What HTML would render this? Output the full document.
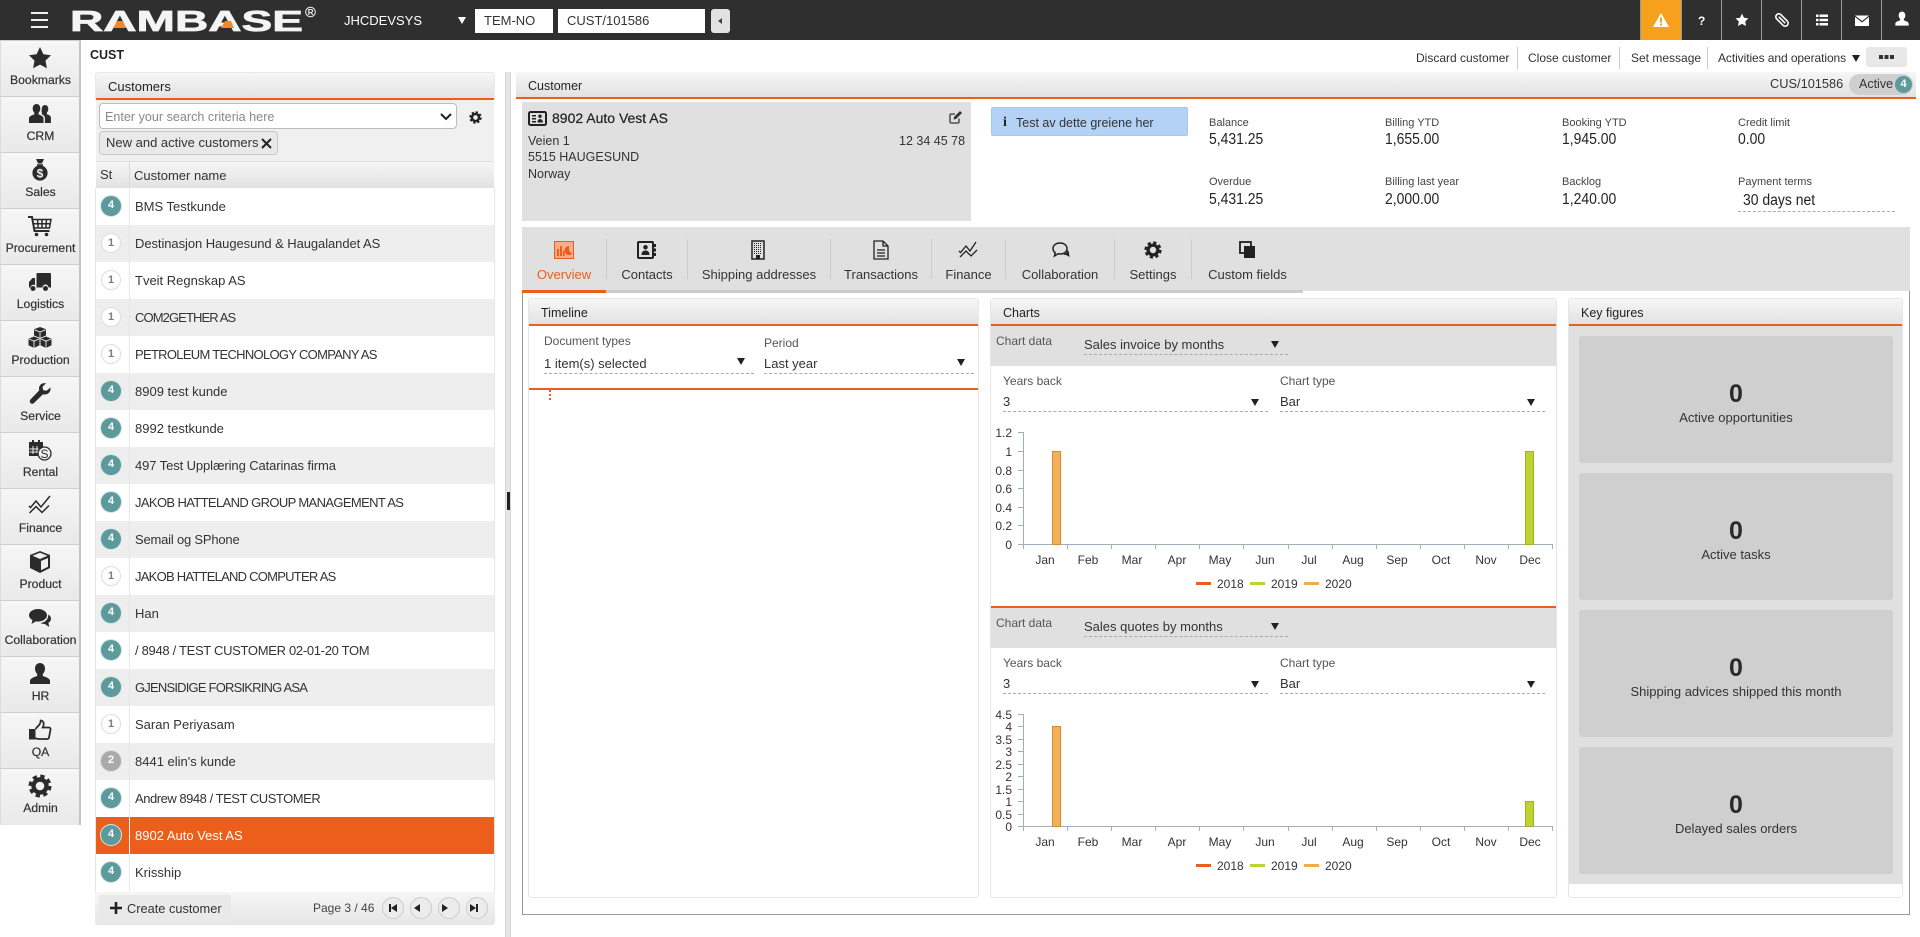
<!DOCTYPE html>
<html><head><meta charset="utf-8"><title>CUST</title>
<style>
*{box-sizing:border-box}
html,body{margin:0;padding:0;width:1920px;height:937px;overflow:hidden;background:#fff;font-family:"Liberation Sans",sans-serif;font-size:13px;color:#333}
.a,.t{position:absolute}
.t{white-space:nowrap;line-height:16px;height:16px}
.g{background:linear-gradient(#f6f6f6,#e2e2e2)}
.o{position:absolute;background:#ec5e1c;height:2px}
.d{position:absolute;border-bottom:1px dashed #aaa;height:1px}
.tri{position:absolute;width:0;height:0;border-left:4px solid transparent;border-right:4px solid transparent;border-top:7px solid #222}
svg{position:absolute;overflow:visible}
.nav{position:absolute;left:0;width:81px;height:56px;border-top:1px solid #cfcfcf;background:linear-gradient(#f6f6f6,#e9e9e9);border-right:2px solid #c4c4c4;border-left:1px solid #ddd}
.nav span{position:absolute;left:0;width:79px;text-align:center;top:31px;line-height:16px;font-size:12.2px;color:#333;-webkit-text-stroke:.2px #333}
.nav svg{left:27px;top:5px}
.top{position:absolute;top:0;width:40px;height:40px;border-left:1px solid #999}
.top svg{left:10px;top:10px}
.row{position:absolute;left:96px;width:398px;height:37px;line-height:38px;padding-left:39px;font-size:13px;color:#333;white-space:nowrap}
.row i{position:absolute;left:33px;top:0;width:1px;height:37px;background:#e6e6e6}
.row b{position:absolute;left:5px;top:8px;width:20px;height:20px;border-radius:50%;text-align:center;line-height:19px;font-size:11px;font-weight:bold;color:#fff;background:#5c9a9c;box-shadow:0 0 0 1px #d8e4e4}
.row b.w{background:#fff;color:#7d7d7d;border:1px solid #ddd;box-shadow:none}
.row b.s{background:#aaa;box-shadow:0 0 0 1px #ddd}
.e{background:#eee}
.pn{position:absolute;width:22px;height:22px;top:897px;border:1px solid #ccc;border-radius:50%;background:#ececec}
.lab{position:absolute;white-space:nowrap;font-size:12px;line-height:14px;color:#444}
.st{font-size:11px;color:#444}
.val{position:absolute;white-space:nowrap;font-size:15.5px;line-height:18px;color:#222;transform:scaleX(.9);transform-origin:0 50%}
.sep{position:absolute;width:1px;background:#ccc}
.tab{position:absolute;top:267px;height:16px;line-height:16px;text-align:center;white-space:nowrap;font-size:13px;color:#333}
.sp{position:absolute;width:1px;top:239px;height:40px;background:#ccc}
.card{position:absolute;left:1579px;width:314px;height:127px;background:#cfcfcf;border-radius:3px;text-align:center}
.card b{position:absolute;left:0;right:0;top:45px;font-size:25px;line-height:26px;color:#2a2a2a}
.card span{position:absolute;left:0;right:0;top:74px;font-size:13px;line-height:16px;color:#333}
.pan{position:absolute;border:1px solid #e6e6e6;border-radius:3px;background:#fff}
.ac{font-size:12px}
</style></head><body>

<svg width="0" height="0" style="position:absolute">
<defs>
<symbol id="gear" viewBox="0 0 24 24"><circle cx="12" cy="12" r="6.5" fill="none" stroke="currentColor" stroke-width="4.4"/><circle cx="12" cy="12" r="9.7" fill="none" stroke="currentColor" stroke-width="3.6" stroke-dasharray="4.2 3.42"/></symbol>
<symbol id="star" viewBox="0 0 24 24"><path fill="currentColor" d="M12 1l3.4 7.2 7.6 1-5.5 5.4 1.4 7.7-6.9-3.7-6.9 3.7 1.4-7.7L1 9.2l7.6-1z"/></symbol>
<symbol id="person" viewBox="0 0 24 24"><path fill="currentColor" d="M12 1c3.2 0 5 2.500 5 5.600 0 2.200-.9 4.200-2.200 5.300v2.100c3 1 7.200 2.300 7.200 5v3H2v-3c0-2.700 4.200-4 7.200-5v-2.100C7.900 10.800 7 8.800 7 6.600 7 3.500 8.800 1 12 1z"/></symbol>
<symbol id="chat" viewBox="0 0 24 24"><path fill="currentColor" d="M10 3c5 0 9 2.800 9 6.300s-4 6.300-9 6.300c-.8 0-1.500-.1-2.200-.2L3.500 18l.9-4C2.300 12.900 1 11.200 1 9.300 1 5.800 5 3 10 3z"/><path fill="currentColor" d="M20.300 8.500c1.700 1 2.700 2.500 2.700 4.200 0 1.700-1 3.200-2.600 4.100l.8 4.200-4.400-3c-1.600 0-3.200-.4-4.400-1 4-.4 8-3 7.900-8.500z"/></symbol>
</defs></svg>

<!-- top bar -->
<div class="a" style="left:0;top:0;width:1920px;height:40px;background:#2f2f2f"></div>
<div class="a" style="left:31px;top:12px;width:17px;height:2px;background:#eee"></div>
<div class="a" style="left:31px;top:19px;width:17px;height:2px;background:#eee"></div>
<div class="a" style="left:31px;top:26px;width:17px;height:2px;background:#eee"></div>
<svg style="left:0;top:0" width="340" height="40">
<text x="70" y="31" font-family="Liberation Sans" font-weight="bold" font-size="29" fill="#f4f4f4" stroke="#f4f4f4" stroke-width=".7" textLength="233" lengthAdjust="spacingAndGlyphs">RAMBASE</text>
<path d="M113 28l4-7h6l3 7z" fill="#ee8a2c"/><path d="M221 28l4-7h6l3 7z" fill="#ee8a2c"/>
<circle cx="310.500" cy="12" r="4.800" fill="none" stroke="#eee" stroke-width="1"/>
<text x="307.800" y="15" font-family="Liberation Sans" font-size="8" font-weight="bold" fill="#eee">R</text>
</svg>
<div class="t" style="left:344px;top:13px;color:#fff;font-size:13px">JHCDEVSYS</div>
<div class="tri" style="left:458px;top:17px;border-top-color:#fff"></div>
<div class="a" style="left:475px;top:9px;width:78px;height:24px;background:#fff"></div>
<div class="t" style="left:484px;top:13px;color:#333">TEM-NO</div>
<div class="a" style="left:558px;top:9px;width:147px;height:24px;background:#fff"></div>
<div class="t" style="left:567px;top:13px;color:#333">CUST/101586</div>
<div class="a" style="left:711px;top:9px;width:19px;height:24px;background:#e2e2e2;border-radius:3px"></div>
<svg style="left:711px;top:9px" width="19" height="24"><path d="M11 9l-4 3 4 3z" fill="#444"/></svg>

<div class="top" style="left:1640px;width:41px;background:#f7a01d"><svg width="20" height="20"><path d="M10 3l8 14H2z" fill="#fff"/><rect x="9" y="7.500" width="2" height="5" fill="#f7a01d"/><rect x="9" y="13.500" width="2" height="2" fill="#f7a01d"/></svg></div>
<div class="top" style="left:1681px"><svg width="20" height="20"><text x="6" y="15" font-family="Liberation Sans" font-weight="bold" font-size="12" fill="#fff">?</text></svg></div>
<div class="top" style="left:1721px"><svg width="20" height="20" style="color:#fff"><use href="#star" x="3" y="3" width="14" height="14"/></svg></div>
<div class="top" style="left:1761px"><svg width="20" height="20"><g transform="rotate(45 10 10)" fill="none" stroke="#fff" stroke-width="1.600"><rect x="2.500" y="7" width="15" height="6" rx="3"/><path d="M5.500 10h9"/></g></svg></div>
<div class="top" style="left:1801px"><svg width="20" height="20"><path fill="#fff" d="M4 4.500h2.500V7H4zM7.500 4.500H16V7H7.500zM4 8.800h2.500v2.500H4zM7.500 8.800H16v2.500H7.500zM4 13h2.500v2.500H4zM7.500 13H16v2.500H7.500z"/></svg></div>
<div class="top" style="left:1841px"><svg width="20" height="20"><path fill="#fff" d="M3 5.500h14l-7 5.500zM3 7v9h14V7l-7 5.500z"/></svg></div>
<div class="top" style="left:1881px"><svg width="20" height="20" style="color:#fff"><use href="#person" x="2" y="1" width="16" height="16"/></svg></div>

<!-- sidebar -->
<div class="a" style="left:0;top:40px;width:81px;height:785px;border-bottom:2px solid #bbb"></div>
<div class="nav" style="top:40px"><svg width="24" height="24" style="color:#2b2b2b"><use href="#star"/></svg><span>Bookmarks</span></div>
<div class="nav" style="top:96px"><svg width="24" height="24"><path fill="#2b2b2b" d="M8.500 2c2.400 0 3.800 2 3.800 4.500 0 1.700-.7 3.200-1.700 4.100v1.900c2.300.8 4.900 1.800 4.900 4V21H1v-4.500c0-2.200 2.700-3.200 5.300-4v-1.900c-1-.9-1.600-2.400-1.600-4.100C4.700 4 6.100 2 8.500 2z"/><path fill="#2b2b2b" d="M17 3c2 0 3.300 1.800 3.300 4 0 1.500-.6 2.800-1.400 3.600v1.700c2 .6 4 1.500 4 3.400V21h-6v-5c0-1.900-1.500-3-3-3.800v-1.500c-.8-.8-.1-2.300-.1-3.700 0-2.200 1.200-4 3.200-4z"/></svg><span>CRM</span></div>
<div class="nav" style="top:152px"><svg width="24" height="24"><path fill="#2b2b2b" d="M8 1h8l-2 4.500h-4zM9 6.300h6v1.500H9z"/><circle cx="12" cy="15" r="7.600" fill="#2b2b2b"/><text x="12" y="19.500" text-anchor="middle" font-family="Liberation Sans" font-weight="bold" font-size="12" fill="#f0f0f0">$</text></svg><span>Sales</span></div>
<div class="nav" style="top:208px"><svg width="24" height="24"><path fill="none" stroke="#2b2b2b" stroke-width="2" d="M0 3h4l2.500 14h15"/><path fill="none" stroke="#2b2b2b" stroke-width="1.500" d="M5 5.500h18l-1.600 8.500H6.500M9.500 5.500l.7 8.500M14 5.500v8.500M18.500 5.500l-.7 8.500M5.500 9.700h16.800"/><circle cx="8.500" cy="20.500" r="1.800" fill="#2b2b2b"/><circle cx="18.500" cy="20.500" r="1.800" fill="#2b2b2b"/></svg><span>Procurement</span></div>
<div class="nav" style="top:264px"><svg width="24" height="24"><path fill="#2b2b2b" d="M9 3h13c.6 0 1 .4 1 1v13.500h-2.500a3 3 0 0 0-6 0H8.500V5c0-1 .2-2 .5-2zM7 8H4.500L1 12v5.500h1.500a3 3 0 0 1 4.500-2.400z"/><circle cx="5" cy="18.500" r="2.500" fill="#2b2b2b"/><circle cx="17.500" cy="18.500" r="2.500" fill="#2b2b2b"/></svg><span>Logistics</span></div>
<div class="nav" style="top:320px"><svg width="24" height="24"><path fill="#2b2b2b" d="M12 1l6 2.300v6.200l-6 2.500-6-2.500V3.300zM6 10.500l5.500 2.300v6.500L6 22 .5 19.300v-6.500zM18 10.500l5.500 2.300v6.500L18 22l-5.500-2.700v-6.500z"/><path stroke="#efefef" stroke-width=".9" fill="none" d="M6.500 3.800L12 6l5.500-2.200M12 6v6M1 13l5 2.200 5-2.200M6 15.200V22M13 13l5 2.200 5-2.200M18 15.200V22"/></svg><span>Production</span></div>
<div class="nav" style="top:376px"><svg width="24" height="24"><path fill="#2b2b2b" d="M22.500 5.500c.6 3.300-1.500 6.400-4.800 6.900-1 .2-1.900 0-2.700-.2L6 21c-1 1-2.500 1-3.500 0s-1-2.500 0-3.500l8.800-9.200c-.3-.9-.4-1.800-.2-2.800C11.700 2.300 14.900.5 18 1.300l-3.500 3.500.7 3.300 3.300.7z"/></svg><span>Service</span></div>
<div class="nav" style="top:432px"><svg width="24" height="24"><path fill="#2b2b2b" d="M1 4h3V2h2v2h4V2h2v2h3v5.300A7.500 7.500 0 0 0 9.700 18H1z"/><path stroke="#efefef" stroke-width="1" d="M5 8v8M9 8v7M1.500 11h9M1.500 14h7"/><circle cx="16.500" cy="15.500" r="6.500" fill="none" stroke="#2b2b2b" stroke-width="1.300"/><text x="16.500" y="20" text-anchor="middle" font-family="Liberation Sans" font-size="12" fill="#2b2b2b">S</text></svg><span>Rental</span></div>
<div class="nav" style="top:488px"><svg width="24" height="24"><path fill="none" stroke="#2b2b2b" stroke-width="1.500" d="M1 12l1.500 1.500L8 7l5 6 9-11M1.500 19l6.500-6.500 6 6 7-7"/></svg><span>Finance</span></div>
<div class="nav" style="top:544px"><svg width="24" height="24"><path fill="#2b2b2b" d="M12 1l10 4v13l-10 5-10-5V5z"/><path fill="#efefef" d="M13 11l7-3v8.800l-7 3.500zM12 2.800l7.500 3L12 9 4.500 5.800z"/></svg><span>Product</span></div>
<div class="nav" style="top:600px"><svg width="24" height="24" style="color:#2b2b2b"><use href="#chat"/></svg><span>Collaboration</span></div>
<div class="nav" style="top:656px"><svg width="24" height="24" style="color:#2b2b2b"><use href="#person"/></svg><span>HR</span></div>
<div class="nav" style="top:712px"><svg width="24" height="24"><path fill="none" stroke="#2b2b2b" stroke-width="1.800" d="M7.500 11l4-4.500c.7-1 1.200-2.500 1.200-4 2 0 3 1.500 3 3.500 0 1.200-.5 2.500-1 3.500h6.300c1 0 1.700 1 1.500 2l-1.500 8c-.2 1-1 1.500-2 1.500H10c-1 0-1.700-.5-2.500-1"/><rect x="1" y="11" width="6.500" height="10.500" fill="#2b2b2b"/></svg><span>QA</span></div>
<div class="nav" style="top:768px;height:57px"><svg width="24" height="24" style="color:#2b2b2b"><use href="#gear"/></svg><span>Admin</span></div>

<div class="t" style="left:90px;top:47px;font-weight:bold;font-size:12.5px;color:#222">CUST</div>

<!-- Customers panel -->
<div class="a g" style="left:95px;top:72px;width:400px;height:27px;border:1px solid #e8e8e8;border-bottom:0;border-radius:3px 3px 0 0"></div>
<div class="t" style="left:108px;top:79px;color:#222">Customers</div>
<div class="o" style="left:96px;top:98px;width:398px"></div>
<div class="a" style="left:96px;top:100px;width:398px;height:61px;background:#f0f0f0"></div>
<div class="a" style="left:99px;top:103px;width:358px;height:26px;background:#fff;border:1px solid #bbb;border-radius:4px"></div>
<div class="t" style="left:105px;top:109px;color:#888;font-size:12.6px">Enter your search criteria here</div>
<svg style="left:440px;top:112px" width="12" height="9"><path d="M1 2l5 5 5-5" fill="none" stroke="#222" stroke-width="2"/></svg>
<svg style="left:469px;top:111px;color:#222" width="13" height="13"><use href="#gear"/></svg>
<div class="a" style="left:99px;top:131px;width:179px;height:24px;background:#e9e9e9;border:1px solid #c8c8c8;border-radius:4px"></div>
<div class="t" style="left:106px;top:135px;color:#333">New and active customers</div>
<svg style="left:261px;top:138px" width="11" height="11"><path d="M1 1l9 9M10 1l-9 9" stroke="#222" stroke-width="2"/></svg>
<div class="a g" style="left:96px;top:161px;width:398px;height:27px;border-top:1px solid #ddd"></div>
<div class="a" style="left:129px;top:161px;width:1px;height:27px;background:#d8d8d8"></div>
<div class="t" style="left:100px;top:167px">St</div>
<div class="t" style="left:134px;top:168px">Customer name</div>

<div class="row" style="top:188px"><i></i><b>4</b>BMS Testkunde</div>
<div class="row e" style="top:225px"><i></i><b class="w">1</b><span style="letter-spacing:-.07px">Destinasjon Haugesund &amp; Haugalandet AS</span></div>
<div class="row" style="top:262px"><i></i><b class="w">1</b>Tveit Regnskap AS</div>
<div class="row e" style="top:299px"><i></i><b class="w">1</b><span style="letter-spacing:-.9px">COM2GETHER AS</span></div>
<div class="row" style="top:336px"><i></i><b class="w">1</b><span style="letter-spacing:-.7px">PETROLEUM TECHNOLOGY COMPANY AS</span></div>
<div class="row e" style="top:373px"><i></i><b>4</b>8909 test kunde</div>
<div class="row" style="top:410px"><i></i><b>4</b>8992 testkunde</div>
<div class="row e" style="top:447px"><i></i><b>4</b><span style="letter-spacing:-.1px">497 Test Upplæring Catarinas firma</span></div>
<div class="row" style="top:484px"><i></i><b>4</b><span style="letter-spacing:-.63px">JAKOB HATTELAND GROUP MANAGEMENT AS</span></div>
<div class="row e" style="top:521px"><i></i><b>4</b><span style="letter-spacing:-.2px">Semail og SPhone</span></div>
<div class="row" style="top:558px"><i></i><b class="w">1</b><span style="letter-spacing:-.75px">JAKOB HATTELAND COMPUTER AS</span></div>
<div class="row e" style="top:595px"><i></i><b>4</b>Han</div>
<div class="row" style="top:632px"><i></i><b>4</b><span style="letter-spacing:-.31px">/ 8948 / TEST CUSTOMER 02-01-20 TOM</span></div>
<div class="row e" style="top:669px"><i></i><b>4</b><span style="letter-spacing:-.8px">GJENSIDIGE FORSIKRING ASA</span></div>
<div class="row" style="top:706px"><i></i><b class="w">1</b>Saran Periyasam</div>
<div class="row e" style="top:743px"><i></i><b class="s">2</b>8441 elin's kunde</div>
<div class="row" style="top:780px"><i></i><b>4</b><span style="letter-spacing:-.47px">Andrew 8948 / TEST CUSTOMER</span></div>
<div class="row" style="top:817px;background:#ec5e1c;color:#fff"><i style="background:#fff"></i><b>4</b>8902 Auto Vest AS</div>
<div class="row" style="top:854px"><i></i><b>4</b>Krisship</div>
<div class="a" style="left:95px;top:188px;width:1px;height:704px;background:#e6e6e6"></div>
<div class="a" style="left:494px;top:188px;width:1px;height:704px;background:#e6e6e6"></div>

<div class="a" style="left:95px;top:892px;width:400px;height:33px;background:linear-gradient(#f6f6f6,#e6e6e6);border-radius:0 0 3px 3px"></div>
<div class="a" style="left:99px;top:895px;width:132px;height:29px;background:#e9e9e9;border-radius:3px"></div>
<svg style="left:110px;top:902px" width="12" height="12"><path d="M6 0v12M0 6h12" stroke="#222" stroke-width="2.600"/></svg>
<div class="t" style="left:127px;top:901px;color:#333;font-size:12.8px">Create customer</div>
<div class="t" style="left:313px;top:900px;font-size:12px;color:#444">Page 3 / 46</div>
<div class="pn" style="left:382px"></div><div class="pn" style="left:410px"></div><div class="pn" style="left:438px"></div><div class="pn" style="left:466px"></div>
<svg style="left:382px;top:897px" width="110" height="22"><path fill="#222" d="M7 7h2v8H7zM15 7v8l-6-4zM38 7v8l-6-4zM60 7v8l6-4zM88 7v8l6-4zM94 7h2v8h-2z"/></svg>

<!-- splitter -->
<div class="a" style="left:505px;top:72px;width:6px;height:865px;background:#e6e6e6;border-left:1px solid #d4d4d4;border-right:1px solid #d4d4d4"></div>
<div class="a" style="left:507px;top:492px;width:3px;height:18px;background:#222"></div>

<!-- action bar -->
<div class="t ac" style="left:1416px;top:50px">Discard customer</div>
<div class="sep" style="left:1517px;top:47px;height:22px"></div>
<div class="t ac" style="left:1528px;top:50px">Close customer</div>
<div class="sep" style="left:1619px;top:47px;height:22px"></div>
<div class="t ac" style="left:1631px;top:50px">Set message</div>
<div class="sep" style="left:1707px;top:47px;height:22px"></div>
<div class="t ac" style="left:1718px;top:50px;letter-spacing:-.08px">Activities and operations</div>
<div class="tri" style="left:1852px;top:55px"></div>
<div class="a" style="left:1866px;top:47px;width:41px;height:20px;background:#e8e8e8;border-radius:3px"></div>
<svg style="left:1879px;top:55px" width="15" height="5"><path fill="#333" d="M0 0h4v4H0zM5.500 0h4v4h-4zM11 0h4v4h-4z"/></svg>

<!-- Customer header -->
<div class="a g" style="left:516px;top:72px;width:1400px;height:25px;border-radius:3px 3px 0 0"></div>
<div class="o" style="left:516px;top:97px;width:1400px"></div>
<div class="t" style="left:528px;top:78px;font-size:12.5px;color:#222">Customer</div>
<div class="t" style="left:1770px;top:76px;color:#333;font-size:12.8px">CUS/101586</div>
<div class="a" style="left:1849px;top:74px;width:64px;height:21px;background:#cfcfcf;border-radius:11px"></div>
<div class="t" style="left:1859px;top:76px;color:#333;font-size:12.5px">Active</div>
<div class="a" style="left:1895px;top:76px;width:17px;height:17px;border-radius:50%;background:#5c9a9c;color:#fff;font-weight:bold;font-size:11px;line-height:17px;text-align:center">4</div>

<!-- info card -->
<div class="a" style="left:522px;top:102px;width:449px;height:119px;background:#e0e0e0"></div>
<svg style="left:528px;top:111px" width="19" height="15"><rect x="1" y="1" width="17" height="13" rx="1.500" fill="none" stroke="#222" stroke-width="2"/><path fill="#222" d="M4 4h4v1.500H4zM4 7h4v1.500H4zM4 10h4v1.500H4zM12 3.500a1.700 1.700 0 1 1 0 3.400 1.700 1.700 0 0 1 0-3.400zM9.500 11.500c0-2 1-3.500 2.500-3.500s3 1.500 3 3.500z"/></svg>
<div class="t" style="left:552px;top:110px;font-size:14px;color:#222;-webkit-text-stroke:.2px #222">8902 Auto Vest AS</div>
<svg style="left:949px;top:110px" width="14" height="14"><path fill="none" stroke="#333" stroke-width="1.300" d="M10 8.500V12c0 .5-.5 1-1 1H2c-.5 0-1-.5-1-1V5c0-.5.500-1 1-1h4"/><path fill="#333" d="M5 7l6-6 2 2-6 6-2.500.5z"/></svg>
<div class="t" style="left:528px;top:133px;font-size:12.5px">Veien 1</div>
<div class="t" style="left:899px;top:133px;font-size:12.5px">12 34 45 78</div>
<div class="t" style="left:528px;top:149px;font-size:12.5px">5515 HAUGESUND</div>
<div class="t" style="left:528px;top:166px;font-size:12.5px">Norway</div>

<div class="a" style="left:991px;top:107px;width:197px;height:29px;background:#b3d2f5;border:1px solid #a6c8ec;border-radius:2px"></div>
<div class="t" style="left:1003px;top:115px;font-weight:bold;font-family:'Liberation Serif',serif;font-size:14px;color:#222">i</div>
<div class="t" style="left:1016px;top:115px;font-size:12.5px">Test av dette greiene her</div>

<div class="lab st" style="left:1209px;top:116px">Balance</div><div class="val" style="left:1209px;top:131px">5,431.25</div>
<div class="lab st" style="left:1209px;top:175px">Overdue</div><div class="val" style="left:1209px;top:191px">5,431.25</div>
<div class="lab st" style="left:1385px;top:116px">Billing YTD</div><div class="val" style="left:1385px;top:131px">1,655.00</div>
<div class="lab st" style="left:1385px;top:175px">Billing last year</div><div class="val" style="left:1385px;top:191px">2,000.00</div>
<div class="lab st" style="left:1562px;top:116px">Booking YTD</div><div class="val" style="left:1562px;top:131px">1,945.00</div>
<div class="lab st" style="left:1562px;top:175px">Backlog</div><div class="val" style="left:1562px;top:191px">1,240.00</div>
<div class="lab st" style="left:1738px;top:116px">Credit limit</div><div class="val" style="left:1738px;top:131px">0.00</div>
<div class="lab st" style="left:1738px;top:175px">Payment terms</div><div class="val" style="left:1743px;top:192px">30 days net</div>
<div class="d" style="left:1738px;top:211px;width:157px"></div>

<!-- tabs -->
<div class="a" style="left:522px;top:227px;width:1388px;height:64px;background:#e0e0e0"></div>
<div class="a" style="left:522px;top:291px;width:1388px;height:624px;border:1px solid #999;border-top:0"></div>
<div class="a" style="left:522px;top:290px;width:781px;height:3px;background:#ccc"></div>
<div class="a" style="left:522px;top:290px;width:84px;height:3px;background:#ec5e1c"></div>
<div class="sp" style="left:606px"></div><div class="sp" style="left:687px"></div><div class="sp" style="left:830px"></div><div class="sp" style="left:931px"></div><div class="sp" style="left:1005px"></div><div class="sp" style="left:1114px"></div><div class="sp" style="left:1191px"></div>
<div class="tab" style="left:522px;width:84px;color:#ec5e1c">Overview</div>
<div class="tab" style="left:607px;width:80px">Contacts</div>
<div class="tab" style="left:688px;width:142px">Shipping addresses</div>
<div class="tab" style="left:831px;width:100px">Transactions</div>
<div class="tab" style="left:932px;width:73px">Finance</div>
<div class="tab" style="left:1006px;width:108px">Collaboration</div>
<div class="tab" style="left:1115px;width:76px">Settings</div>
<div class="tab" style="left:1192px;width:111px">Custom fields</div>
<svg style="left:554px;top:241px" width="20" height="18"><rect x=".5" y=".5" width="19" height="17" fill="#f5ad8a" stroke="#ec5e1c"/><path fill="#ec5e1c" d="M3 8h2v7H3zM6 5h2v10H6zM9 10h1.500v5H9z"/><path fill="#ec5e1c" d="M15 5a4.500 4.500 0 1 0 3 7.800L15 9.500z"/></svg>
<svg style="left:637px;top:241px" width="20" height="18"><rect x="1" y="1" width="15" height="16" rx="1" fill="none" stroke="#222" stroke-width="2"/><path fill="#222" d="M17 3h2v3h-2zM17 7.500h2v3h-2zM17 12h2v3h-2zM8.500 4a2.200 2.200 0 1 1 0 4.500 2.200 2.200 0 0 1 0-4.500zM4.500 14c0-3 1.500-4.500 4-4.500s4 1.500 4 4.500z"/></svg>
<svg style="left:751px;top:240px" width="14" height="20"><rect x="1" y="1" width="12" height="18" fill="none" stroke="#222" stroke-width="1.500"/><path stroke="#222" stroke-width="1" stroke-dasharray="1 1" d="M3.500 3v11M5.500 3v11M7.500 3v11M9.500 3v11"/><rect x="5" y="15" width="4" height="4" fill="#222"/></svg>
<svg style="left:873px;top:240px" width="16" height="20"><path fill="none" stroke="#222" stroke-width="1.300" d="M1 1h9l5 5v13H1zM10 1v5h5M4 10h8M4 13h8M4 16h8"/></svg>
<svg style="left:959px;top:241px" width="20" height="18"><path fill="none" stroke="#222" stroke-width="1.300" d="M0 10l1.500 1.500L7 5l4 5 6-9M1 16l6-6 5 5 6-6"/></svg>
<svg style="left:1051px;top:241px" width="20" height="18"><path fill="none" stroke="#222" stroke-width="1.500" d="M9 2c4 0 7 2.300 7 5.500S13 13 9 13c-.7 0-1.400-.1-2-.2L3.500 15l.7-3.200C2.800 10.700 2 9.200 2 7.500 2 4.300 5 2 9 2z"/><path fill="#222" d="M16.500 9c1 .8 1.500 2 1.500 3.200l.6 3.800-3.500-2c-1.200 0-2.200-.2-3-.8 2-.3 4-1.500 4.400-4.200z"/></svg>
<svg style="left:1144px;top:241px;color:#222" width="18" height="18"><use href="#gear"/></svg>
<svg style="left:1238px;top:241px" width="20" height="18"><rect x="2" y="1" width="11" height="11" fill="none" stroke="#222" stroke-width="1.800"/><rect x="6" y="5" width="11" height="12" fill="#222"/></svg>

<!-- Timeline -->
<div class="pan" style="left:528px;top:298px;width:451px;height:600px"></div>
<div class="a g" style="left:529px;top:299px;width:449px;height:25px"></div>
<div class="o" style="left:529px;top:324px;width:449px"></div>
<div class="t" style="left:541px;top:305px;font-size:12.5px;color:#222">Timeline</div>
<div class="lab" style="left:544px;top:334px;color:#555">Document types</div>
<div class="lab" style="left:764px;top:336px;color:#555">Period</div>
<div class="t" style="left:544px;top:356px">1 item(s) selected</div>
<div class="t" style="left:764px;top:356px">Last year</div>
<div class="tri" style="left:737px;top:358px"></div><div class="tri" style="left:957px;top:359px"></div>
<div class="d" style="left:544px;top:373px;width:210px"></div><div class="d" style="left:764px;top:373px;width:210px"></div>
<div class="o" style="left:529px;top:388px;width:449px"></div>
<div class="a" style="left:549px;top:390px;width:2px;height:10px;background:repeating-linear-gradient(#ec5e1c 0 2px,transparent 2px 4px)"></div>

<!-- Charts panel -->
<div class="pan" style="left:990px;top:298px;width:567px;height:600px"></div>
<div class="a g" style="left:991px;top:299px;width:565px;height:25px"></div>
<div class="o" style="left:991px;top:324px;width:565px"></div>
<div class="t" style="left:1003px;top:305px;font-size:12.5px;color:#222">Charts</div>
<div class="a" style="left:991px;top:326px;width:565px;height:40px;background:#e0e0e0"></div>
<div class="lab" style="left:996px;top:334px;color:#555">Chart data</div>
<div class="t" style="left:1084px;top:337px">Sales invoice by months</div>
<div class="tri" style="left:1271px;top:341px"></div>
<div class="d" style="left:1084px;top:354px;width:204px"></div>
<div class="lab" style="left:1003px;top:374px;color:#555">Years back</div>
<div class="lab" style="left:1280px;top:374px;color:#555">Chart type</div>
<div class="t" style="left:1003px;top:394px">3</div><div class="t" style="left:1280px;top:394px">Bar</div>
<div class="tri" style="left:1251px;top:399px"></div><div class="tri" style="left:1527px;top:399px"></div>
<div class="d" style="left:1003px;top:411px;width:265px"></div><div class="d" style="left:1280px;top:411px;width:265px"></div>

<div class="o" style="left:991px;top:606px;width:565px"></div>
<div class="a" style="left:991px;top:608px;width:565px;height:40px;background:#e0e0e0"></div>
<div class="lab" style="left:996px;top:616px;color:#555">Chart data</div>
<div class="t" style="left:1084px;top:619px">Sales quotes by months</div>
<div class="tri" style="left:1271px;top:623px"></div>
<div class="d" style="left:1084px;top:636px;width:204px"></div>
<div class="lab" style="left:1003px;top:656px;color:#555">Years back</div>
<div class="lab" style="left:1280px;top:656px;color:#555">Chart type</div>
<div class="t" style="left:1003px;top:676px">3</div><div class="t" style="left:1280px;top:676px">Bar</div>
<div class="tri" style="left:1251px;top:681px"></div><div class="tri" style="left:1527px;top:681px"></div>
<div class="d" style="left:1003px;top:693px;width:265px"></div><div class="d" style="left:1280px;top:693px;width:265px"></div>

<svg style="left:0;top:0" width="1920" height="937" font-family="Liberation Sans" font-size="12" fill="#333">
<g fill="none" stroke="#9fb0b8" stroke-width="1">
<path d="M1023.500 432V544.500H1552.500M1018 432.500h5M1018 451.500h5M1018 470.500h5M1018 488.500h5M1018 507.500h5M1018 525.500h5M1018 544.500h5"/>
<path d="M1023.500 544v5M1067.500 544v5M1111.500 544v5M1155.500 544v5M1199.500 544v5M1243.500 544v5M1288.500 544v5M1332.500 544v5M1376.500 544v5M1420.500 544v5M1464.500 544v5M1508.500 544v5M1552.500 544v5"/>
<path d="M1023.500 714V826.500H1552.500M1018 714.500h5M1018 726.500h5M1018 739.500h5M1018 751.500h5M1018 764.500h5M1018 776.500h5M1018 789.500h5M1018 801.500h5M1018 814.500h5M1018 826.500h5"/>
<path d="M1023.500 826v5M1067.500 826v5M1111.500 826v5M1155.500 826v5M1199.500 826v5M1243.500 826v5M1288.500 826v5M1332.500 826v5M1376.500 826v5M1420.500 826v5M1464.500 826v5M1508.500 826v5M1552.500 826v5"/>
</g>
<rect x="1052.500" y="451.500" width="8" height="93" fill="#f5b05a" stroke="#d98a2b"/>
<rect x="1525.500" y="451.500" width="8" height="93" fill="#bed232" stroke="#a0b02a"/>
<rect x="1052.500" y="726.500" width="8" height="100" fill="#f5b05a" stroke="#d98a2b"/>
<rect x="1525.500" y="801.500" width="8" height="25" fill="#bed232" stroke="#a0b02a"/>
<g text-anchor="end">
<text x="1012" y="437">1.2</text><text x="1012" y="456">1</text><text x="1012" y="475">0.8</text><text x="1012" y="493">0.6</text><text x="1012" y="512">0.4</text><text x="1012" y="530">0.2</text><text x="1012" y="549">0</text>
<text x="1012" y="719">4.5</text><text x="1012" y="731">4</text><text x="1012" y="744">3.5</text><text x="1012" y="756">3</text><text x="1012" y="769">2.5</text><text x="1012" y="781">2</text><text x="1012" y="794">1.5</text><text x="1012" y="806">1</text><text x="1012" y="819">0.5</text><text x="1012" y="831">0</text>
</g>
<g text-anchor="middle">
<text x="1045" y="564">Jan</text><text x="1088" y="564">Feb</text><text x="1132" y="564">Mar</text><text x="1177" y="564">Apr</text><text x="1220" y="564">May</text><text x="1265" y="564">Jun</text><text x="1309" y="564">Jul</text><text x="1353" y="564">Aug</text><text x="1397" y="564">Sep</text><text x="1441" y="564">Oct</text><text x="1486" y="564">Nov</text><text x="1530" y="564">Dec</text>
<text x="1045" y="846">Jan</text><text x="1088" y="846">Feb</text><text x="1132" y="846">Mar</text><text x="1177" y="846">Apr</text><text x="1220" y="846">May</text><text x="1265" y="846">Jun</text><text x="1309" y="846">Jul</text><text x="1353" y="846">Aug</text><text x="1397" y="846">Sep</text><text x="1441" y="846">Oct</text><text x="1486" y="846">Nov</text><text x="1530" y="846">Dec</text>
</g>
<path fill="#ec5e1c" d="M1196 582h15v3h-15zM1196 864h15v3h-15z"/><path fill="#bed232" d="M1250 582h15v3h-15zM1250 864h15v3h-15z"/><path fill="#f7a84a" d="M1304 582h15v3h-15zM1304 864h15v3h-15z"/>
<text x="1217" y="588">2018</text><text x="1271" y="588">2019</text><text x="1325" y="588">2020</text>
<text x="1217" y="870">2018</text><text x="1271" y="870">2019</text><text x="1325" y="870">2020</text>
</svg>

<!-- Key figures -->
<div class="pan" style="left:1568px;top:298px;width:335px;height:600px"></div>
<div class="a g" style="left:1569px;top:299px;width:333px;height:25px"></div>
<div class="o" style="left:1569px;top:324px;width:333px"></div>
<div class="t" style="left:1581px;top:305px;font-size:12.5px;color:#222">Key figures</div>
<div class="a" style="left:1569px;top:326px;width:333px;height:558px;background:#e0e0e0"></div>
<div class="card" style="top:336px"><b>0</b><span>Active opportunities</span></div>
<div class="card" style="top:473px"><b>0</b><span>Active tasks</span></div>
<div class="card" style="top:610px"><b>0</b><span>Shipping advices shipped this month</span></div>
<div class="card" style="top:747px"><b>0</b><span>Delayed sales orders</span></div>

</body></html>
